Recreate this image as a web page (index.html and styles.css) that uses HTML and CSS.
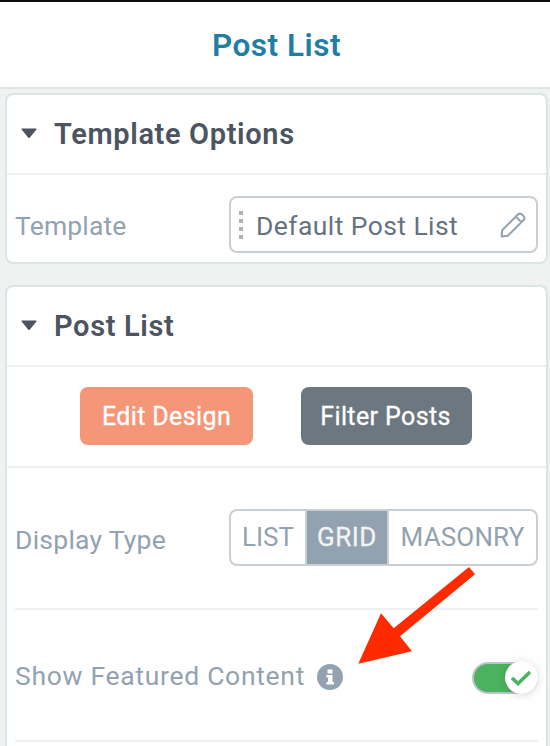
FILE: index.html
```html
<!DOCTYPE html>
<html lang="en">
<head>
    <meta charset="UTF-8">
    <title>Post List</title>
    <link rel="stylesheet" href="styles.css">
</head>
<body>
    <header class="panel-header">
        <h1>Post List</h1>
    </header>

    <section class="card">
        <h2 class="card-head">
            <svg class="caret" viewBox="0 0 17 11"><path d="M1.5 0.5h14q1.3 0 .4 1L9.400 9.400q-.9 1-1.800 0L1.100 1.500q-.9-1 .4-1z"/></svg>
            <span>Template Options</span>
        </h2>
        <div class="row row-template">
            <span class="label label-template">Template</span>
            <div class="template-box">
                <span class="grip"><i></i><i></i><i></i><i></i></span>
                <span class="template-name">Default Post List</span>
                <svg class="pencil" viewBox="0 0 26 26">
                    <path d="M1.500 24.500L2.200 18.200 18.200 2.200Q19.900 .7 21.600 2.200L23.800 4.400Q25.300 6.100 23.800 7.800L7.800 23.800zM15.800 4.600l5.600 5.600"/>
                </svg>
            </div>
        </div>
    </section>

    <section class="card card-posts">
        <h2 class="card-head">
            <svg class="caret" viewBox="0 0 17 11"><path d="M1.5 0.5h14q1.3 0 .4 1L9.400 9.400q-.9 1-1.800 0L1.100 1.500q-.9-1 .4-1z"/></svg>
            <span>Post List</span>
        </h2>
        <div class="buttons">
            <button type="button" class="btn btn-edit">Edit Design</button>
            <button type="button" class="btn btn-filter">Filter Posts</button>
        </div>
        <div class="row row-display">
            <span class="label label-display">Display Type</span>
            <div class="segments">
                <span class="segment seg-list">LIST</span>
                <span class="segment seg-grid">GRID</span>
                <span class="segment seg-masonry">MASONRY</span>
            </div>
        </div>
        <div class="row row-featured">
            <span class="label label-featured">Show Featured Content</span>
            <svg class="info" viewBox="0 0 26 26">
                <circle cx="13" cy="13" r="13"/>
                <path fill="#fff" d="M10.500 5.500h5v4h-5zM9.500 11h6v7h1.500v2.500h-7.500V18H11v-4.500H9.500z"/>
            </svg>
            <span class="toggle">
                <span class="knob">
                    <svg viewBox="0 0 22 16"><path d="M2 8l6 5.500L20 2"/></svg>
                </span>
            </span>
        </div>
    </section>

    <svg class="arrow" viewBox="0 0 120 100">
        <path d="M.3 97.700L23 47.300 35.700 62.300 111 1l6 7.300L42 70.300 54 85.300z"/>
    </svg>
</body>
</html>
```
FILE: styles.css
```css
* {
    box-sizing: border-box;
}
body {
    margin: 0;
    background-color: #eff2f1;
    font-family: Roboto, "Noto Sans", sans-serif;
    font-size: 26px;
    color: #92a2b0;
}
h1, h2 {
    margin: 0;
    font-weight: 600;
    white-space: nowrap;
}
.panel-header {
    height: 89px;
    margin-bottom: 4px;
    border-top: 2px solid #0b0b0d;
    border-bottom: 2px solid #dbe5e4;
    background-color: #fff;
}
h1 {
    padding-left: 3px;
    font-size: 31.5px;
    line-height: 87px;
    letter-spacing: 0.5px;
    text-align: center;
    color: #1f7ea4;
}
.card {
    width: 543px;
    margin: 0 0 21px 5px;
    border: 2px solid #dbe5e4;
    border-radius: 8px;
    background-color: #fff;
}
.card-posts {
    height: 461px;
    margin-bottom: 0;
    border-bottom: none;
    border-radius: 8px 8px 0 0;
}
.card-head {
    display: flex;
    align-items: center;
    height: 80px;
    padding-left: 13px;
    border-bottom: 2px solid #eef0f1;
    font-size: 29px;
    letter-spacing: 0.65px;
    color: #4b5460;
}
.caret {
    width: 18px;
    height: 11px;
    margin: -1px 16px 0 0;
    fill: #4b5460;
}
.row {
    display: flex;
    align-items: center;
    margin: 0 8px;
    white-space: nowrap;
}
.label {
    padding-top: 2px;
    font-size: 26.5px;
}
.label-template {
    letter-spacing: 0.15px;
}
.label-display {
    letter-spacing: 0.25px;
}
.label-featured {
    padding-top: 0;
    letter-spacing: 0.7px;
}
.row-template {
    height: 87px;
    padding-top: 12px;
}
.template-box {
    display: flex;
    align-items: center;
    width: 309px;
    height: 57px;
    margin-left: auto;
    padding: 0 10px 0 8px;
    border: 2px solid #c8cfd5;
    border-radius: 8px;
    color: #66727e;
}
.template-name {
    padding-top: 2px;
    font-size: 26.5px;
    letter-spacing: 0.42px;
}
.grip {
    display: grid;
    gap: 4px;
    margin-right: 13px;
}
.grip i {
    width: 4px;
    height: 4px;
    background-color: #a9b2bb;
}
.pencil {
    width: 26px;
    height: 26px;
    margin-left: auto;
    fill: none;
    stroke: #92a2b0;
    stroke-width: 2;
    stroke-linejoin: round;
}
.buttons {
    display: flex;
    align-items: center;
    gap: 48px;
    height: 101px;
    padding: 0 0 1px 73px;
    border-bottom: 2px solid #eef0f1;
}
.btn {
    height: 58px;
    padding: 0;
    border: none;
    border-radius: 8px;
    font-family: inherit;
    font-size: 25px;
    letter-spacing: 0.38px;
    color: #fff;
    white-space: nowrap;
    -webkit-text-stroke: 0.3px #fff;
}
.btn-edit {
    width: 173px;
    background-color: #f69678;
}
.btn-filter {
    width: 171px;
    padding-right: 2px;
    background-color: #6d7780;
}
.row-display {
    height: 142px;
    border-bottom: 2px solid #eef1f1;
}
.segments {
    display: flex;
    width: 309px;
    height: 57px;
    margin: -1px 0 0 auto;
    border: 2px solid #c8cfd5;
    border-radius: 8px;
    line-height: 52px;
    text-align: center;
}
.seg-list {
    width: 74px;
}
.seg-grid {
    width: 84px;
    border: solid #c8cfd5;
    border-width: 0 2px;
    letter-spacing: 0.5px;
    background-color: #92a2b0;
    color: #f1f4f5;
    -webkit-text-stroke: 0.3px #f1f4f5;
}
.seg-masonry {
    width: 147px;
    letter-spacing: 0.15px;
}
.row-featured {
    height: 132px;
    border-bottom: 2px solid #eef0f1;
}
.info {
    width: 26px;
    height: 26px;
    margin: 4px 0 0 12px;
    fill: #92a2b0;
}
.toggle {
    display: flex;
    justify-content: flex-end;
    align-items: center;
    width: 66px;
    height: 32px;
    margin: 5px 0 0 auto;
    border: 2px solid #bcc3cc;
    border-radius: 16px;
    background-color: #4bb35e;
}
.knob {
    display: flex;
    align-items: center;
    justify-content: center;
    flex: none;
    width: 33px;
    height: 33px;
    margin-right: -2px;
    border-radius: 50%;
    background-color: #fff;
    box-shadow: 0 1px 10px rgba(0, 0, 0, 0.15);
}
.knob svg {
    width: 22px;
    height: 16px;
    margin-right: 1px;
    fill: none;
    stroke: #4bb35e;
    stroke-width: 3.5;
}
.arrow {
    position: absolute;
    left: 358px;
    top: 566px;
    width: 120px;
    height: 100px;
    fill: #ff2a00;
}
```
